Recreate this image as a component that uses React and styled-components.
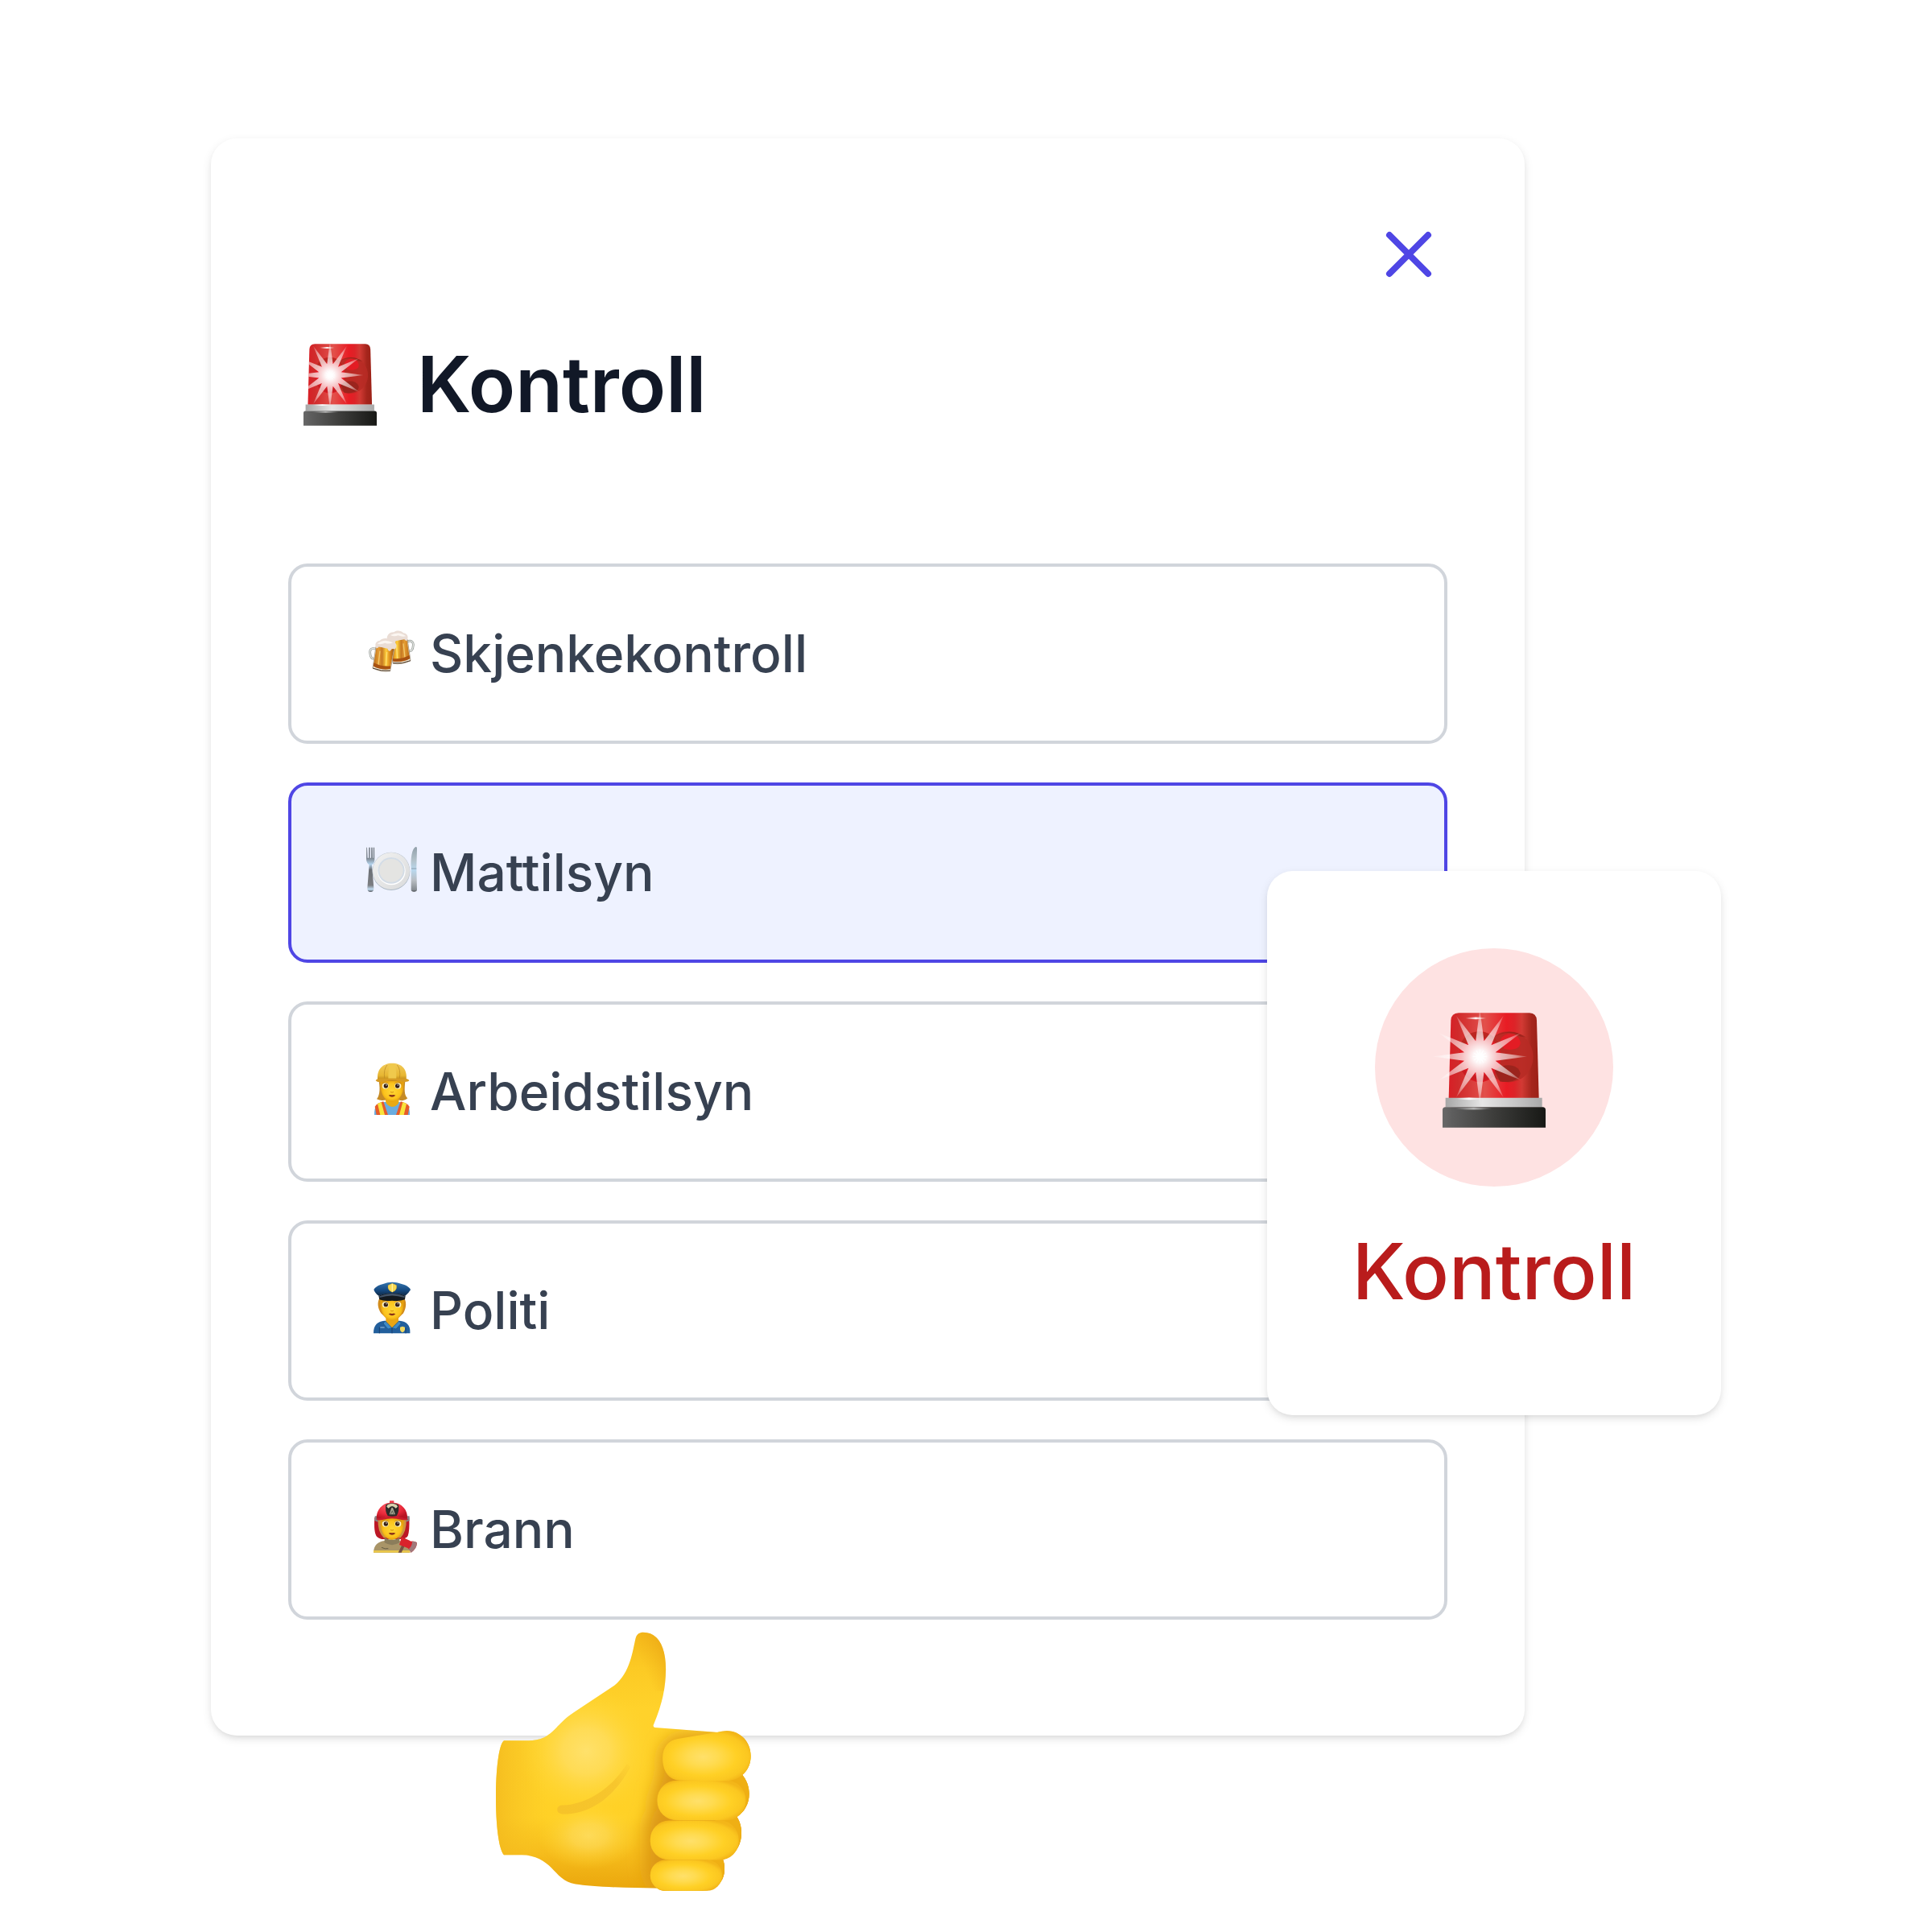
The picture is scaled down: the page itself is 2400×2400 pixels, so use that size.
import React from 'react'
import styled, { createGlobalStyle } from 'styled-components'

const GlobalStyle = createGlobalStyle`
  * {
    box-sizing: border-box;
  }

  body {
    margin: 0;
    background: #ffffff;
    font-family: Inter, "Liberation Sans", sans-serif;
  }
`

const Page = styled.main`
  padding: 172px 506px 244px 262px;
`

const Panel = styled.section`
  position: relative;
  display: flex;
  flex-direction: column;
  padding: 96px 96px 144px;
  border-radius: 32px;
  background: #ffffff;
  box-shadow: 0 4px 12px rgba(0, 0, 0, 0.1), 0 4px 8px -4px rgba(0, 0, 0, 0.1);
`

const CloseButton = styled.button`
  align-self: flex-end;
  display: flex;
  width: 96px;
  height: 96px;
  padding: 0;
  border: none;
  background: transparent;
  color: #4f46e5;
  cursor: pointer;

  svg {
    width: 100%;
    height: 100%;
  }
`

const Heading = styled.h1`
  display: flex;
  align-items: center;
  gap: 32px;
  margin: 56px 0 166px;
  color: #111827;
  font-size: 96px;
  font-weight: 600;
  line-height: 114px;
`

const HeadingIcon = styled.span`
  display: flex;
  justify-content: center;
  width: 128px;
  padding-top: 2px;

  svg {
    width: 91px;
    height: 102px;
  }
`

const Options = styled.div`
  display: flex;
  flex-direction: column;
  gap: 48px;
`

const Option = styled.button`
  display: flex;
  align-items: center;
  gap: 14px;
  width: 100%;
  padding: 60px 92px;
  border: 4px solid ${({ $selected }) => ($selected ? '#4f46e5' : '#d1d5db')};
  border-radius: 24px;
  background: ${({ $selected }) => ($selected ? '#eef2ff' : '#ffffff')};
  color: #374151;
  font-family: inherit;
  font-size: 64px;
  font-weight: 500;
  line-height: 96px;
  text-align: left;
  cursor: pointer;
`

const Emoji = styled.svg`
  flex: none;
  width: 66px;
  height: 66px;
  overflow: visible;
`

const Card = styled.article`
  position: absolute;
  top: 910px;
  right: -244px;
  display: flex;
  flex-direction: column;
  align-items: center;
  gap: 48px;
  width: 564px;
  padding: 96px 0 122px;
  border-radius: 32px;
  background: #ffffff;
  box-shadow: 0 4px 12px rgba(0, 0, 0, 0.1), 0 4px 8px -4px rgba(0, 0, 0, 0.1);
`

const Circle = styled.div`
  display: flex;
  align-items: center;
  justify-content: center;
  width: 296px;
  height: 296px;
  padding-top: 6px;
  border-radius: 50%;
  background: #fee2e2;

  svg {
    width: 128px;
    height: 143px;
    overflow: visible;
  }
`

const CardTitle = styled.h2`
  margin: 0;
  color: #b91c1c;
  font-size: 96px;
  font-weight: 500;
  line-height: 114px;
`

const ThumbWrap = styled.div`
  position: absolute;
  bottom: -193px;
  left: 354px;
  display: flex;

  svg {
    width: 317px;
    height: 322px;
  }
`

// twelve pointed flash in front of the lamp
function starPoints(cx, cy, outer, inner) {
  const points = []
  for (let i = 0; i < 24; i += 1) {
    const r = i % 2 === 0 ? outer : inner
    const a = (i * Math.PI) / 12
    points.push(`${(cx + r * Math.cos(a)).toFixed(1)},${(cy + r * Math.sin(a)).toFixed(1)}`)
  }
  return points.join(' ')
}

function Siren({ id, clipRays }) {
  const dome = 'M337 322 Q338 295 366 294 H630 Q656 295 657 322 L665 612 H329 Z'
  return (
    <svg viewBox="306 294 384 428" aria-hidden="true">
      <defs>
        <linearGradient id={`${id}-dome`}>
          <stop offset="0" stopColor="#d81f26" />
          <stop offset="0.1" stopColor="#d02a2b" />
          <stop offset="0.4" stopColor="#e2504b" />
          <stop offset="0.64" stopColor="#e81c24" />
          <stop offset="0.73" stopColor="#dd2328" />
          <stop offset="0.81" stopColor="#d23a34" />
          <stop offset="0.92" stopColor="#a5251c" />
          <stop offset="1" stopColor="#9c2117" />
        </linearGradient>
        <linearGradient id={`${id}-ring`}>
          <stop offset="0" stopColor="#a6a6a6" />
          <stop offset="0.38" stopColor="#e6e6e6" />
          <stop offset="0.75" stopColor="#c4c4c4" />
          <stop offset="1" stopColor="#a9a9a9" />
        </linearGradient>
        <linearGradient id={`${id}-base`}>
          <stop offset="0" stopColor="#686868" />
          <stop offset="0.1" stopColor="#5d5d5d" />
          <stop offset="0.5" stopColor="#3d3d3b" />
          <stop offset="1" stopColor="#171815" />
        </linearGradient>
        <linearGradient id={`${id}-shine`}>
          <stop offset="0" stopColor="#fff" stopOpacity="0" />
          <stop offset="0.5" stopColor="#fff" stopOpacity="0.95" />
          <stop offset="1" stopColor="#fff" stopOpacity="0" />
        </linearGradient>
        <radialGradient id={`${id}-flash`} gradientUnits="userSpaceOnUse" cx="445" cy="457" r="176">
          <stop offset="0" stopColor="#fff" />
          <stop offset="0.14" stopColor="#fff" stopOpacity="0.96" />
          <stop offset="0.38" stopColor="#fff" stopOpacity="0.72" />
          <stop offset="0.75" stopColor="#fff" stopOpacity="0.5" />
          <stop offset="1" stopColor="#fff" stopOpacity="0.15" />
        </radialGradient>
        <clipPath id={`${id}-clip`}>
          <path d={dome} />
        </clipPath>
      </defs>
      <path d={dome} fill={`url(#${id}-dome)`} />
      <ellipse cx="552" cy="458" rx="92" ry="95" fill="#b72b25" opacity="0.9" />
      <path d="M498 383 Q560 345 618 386 L595 382 Q555 355 498 383" fill="#8e2018" opacity="0.6" />
      <ellipse cx="445" cy="458" rx="78" ry="95" fill="#e01b24" />
      <path d="M370 430 C376 344 500 344 518 420 C480 376 416 376 370 430" fill="#b52821" opacity="0.85" />
      <path d="M372 488 C380 568 504 568 520 490 C485 540 410 542 372 488" fill="#c71d22" opacity="0.8" />
      <path d="M520 402 C524 366 588 358 596 404 C598 430 560 436 535 428 Z" fill="#e31c24" />
      <path d="M500 508 C540 478 590 486 596 520 C594 548 550 556 520 550 Z" fill="#94231b" opacity="0.8" />
      <path d="M317 611 H677 V645 H317 Z" fill={`url(#${id}-ring)`} />
      <path d="M306 656 Q306 645 317 645 H679 Q690 645 690 656 V722 H306 Z" fill={`url(#${id}-base)`} />
      <ellipse cx="430" cy="314" rx="40" ry="4" fill={`url(#${id}-shine)`} />
      <ellipse cx="422" cy="651" rx="70" ry="4" fill={`url(#${id}-shine)`} opacity="0.6" />
      <ellipse cx="405" cy="614" rx="50" ry="4" fill={`url(#${id}-shine)`} />
      <g clipPath={clipRays ? `url(#${id}-clip)` : undefined}>
        <polygon points={starPoints(445, 457, 176, 60)} fill={`url(#${id}-flash)`} />
        <polygon points={starPoints(445, 457, 30, 12)} fill="#fff" />
      </g>
    </svg>
  )
}

function Mug() {
  return (
    <g>
      <path d="M111 139 C97 133 88 139 89 152 C90 169 95 177 108 174" fill="none" stroke="#8f9490" strokeWidth="8" />
      <path d="M111 139 C97 133 88 139 89 152 C90 169 95 177 108 174" fill="none" stroke="#e3e6e2" strokeWidth="4" />
      <path d="M111 130 L180 137 L164 221 Q130 226 99 210 Z" fill="#f1e7d4" stroke="#8d7a62" strokeWidth="2" />
      <path d="M113 130 L178 137 L164 212 Q130 218 102 202 Z" fill="url(#beer)" />
      <path d="M126 146 L120 198 M152 150 L148 202" stroke="#fff0a0" strokeWidth="4" opacity="0.55" />
      <path d="M103 190 Q132 206 166 202 L164 213 Q130 218 102 203 Z" fill="#a85212" />
      <path d="M99 210 Q130 223 164 219" fill="none" stroke="#4d3c2d" strokeWidth="3" />
      <path d="M110 130 C106 114 117 108 126 107 C134 96 155 97 160 104 C178 102 190 118 186 131 C184 145 174 134 168 140 C164 151 157 146 154 137 L122 130 Q114 142 110 130" fill="#eaddd5" />
      <path d="M116 119 Q142 98 174 115 Q160 122 145 116 Q130 123 116 119" fill="#fbf6f1" />
    </g>
  )
}

function BeerEmoji() {
  return (
    <Emoji viewBox="72 57 198 198" aria-hidden="true">
      <defs>
        <linearGradient id="beer">
          <stop offset="0" stopColor="#b96c16" />
          <stop offset="0.25" stopColor="#e59c33" />
          <stop offset="0.42" stopColor="#c67a24" />
          <stop offset="0.62" stopColor="#ffcf3a" />
          <stop offset="0.82" stopColor="#d9861c" />
          <stop offset="1" stopColor="#9c5816" />
        </linearGradient>
      </defs>
      {/* back mug is the front one mirrored */}
      <g transform="translate(339 -28) scale(-1 1)">
        <Mug />
      </g>
      <Mug />
    </Emoji>
  )
}

function PlateEmoji() {
  return (
    <Emoji viewBox="72 63 198 198" aria-hidden="true">
      <defs>
        <linearGradient id="steel" x2="0" y2="1">
          <stop offset="0" stopColor="#636a72" />
          <stop offset="0.25" stopColor="#828c96" />
          <stop offset="0.38" stopColor="#b4d4ee" />
          <stop offset="0.5" stopColor="#6b6f75" />
          <stop offset="0.85" stopColor="#7c7e82" />
          <stop offset="0.94" stopColor="#c2ddf2" />
          <stop offset="1" stopColor="#53565b" />
        </linearGradient>
        <linearGradient id="blade" x2="0" y2="1">
          <stop offset="0" stopColor="#91a0aa" />
          <stop offset="0.3" stopColor="#b3c2ca" />
          <stop offset="0.52" stopColor="#b9d8ee" />
          <stop offset="0.75" stopColor="#b8bdc2" />
          <stop offset="0.96" stopColor="#858b91" />
          <stop offset="1" stopColor="#44484c" />
        </linearGradient>
        <linearGradient id="china" x2="1" y2="1">
          <stop offset="0" stopColor="#f2f2f1" />
          <stop offset="1" stopColor="#d9dadb" />
        </linearGradient>
      </defs>
      <path d="M78 68 L80 107 H84 L85 68 H89 V107 H93 L94 68 H98 L99 107 H101 L102 68 H105 L106 113 Q106 126 96 133 L103 220 Q104 234 91 234 Q78 234 79 220 L86 133 Q75 126 75 112 L76 68 Z" fill="url(#steel)" />
      <ellipse cx="168" cy="157" rx="70" ry="71" fill="#adb9c4" />
      <ellipse cx="168" cy="156" rx="69" ry="69" fill="url(#china)" />
      <ellipse cx="169" cy="157" rx="52" ry="51" fill="#fff" />
      <ellipse cx="168" cy="154" rx="50" ry="49" fill="#d3dce6" />
      <ellipse cx="168" cy="154" rx="44" ry="43" fill="#e4e4e2" />
      <path d="M242 144 C240 110 245 72 259 66 Q265 65 264 76 L262 144 L264 226 Q264 233 253 233 Q242 233 242 226 Z" fill="url(#blade)" />
      <path d="M243 147 H262" stroke="#76848f" strokeWidth="2" />
    </Emoji>
  )
}

function Face({ y = 0 }) {
  return (
    <g transform={`translate(0 ${y})`}>
      <path d="M128 125 H215 C217 162 207 201 171 207 C137 202 125 165 128 125" fill="url(#skin)" />
      <ellipse cx="146" cy="147" rx="12" ry="11" fill="#f9f1c5" />
      <ellipse cx="193" cy="147" rx="12" ry="11" fill="#f9f1c5" />
      <circle cx="148" cy="147" r="8" fill="#372017" />
      <circle cx="191" cy="147" r="8" fill="#372017" />
      <circle cx="150" cy="144" r="2" fill="#fff" />
      <circle cx="193" cy="144" r="2" fill="#fff" />
      <path d="M165 169 Q171 174 177 169" fill="none" stroke="#d38c13" strokeWidth="3" />
      <path d="M158 182 Q165 178 171 181 Q177 178 184 182 Q171 194 158 182" fill="#862e16" />
      <path d="M133 138 Q145 129 158 138 M181 138 Q194 129 206 138" fill="none" stroke="#b57a1c" strokeWidth="2" />
    </g>
  )
}

function WorkerEmoji() {
  return (
    <Emoji viewBox="72 69 198 198" aria-hidden="true">
      <defs>
        <radialGradient id="skin">
          <stop offset="0" stopColor="#ffd735" />
          <stop offset="0.7" stopColor="#fcc41d" />
          <stop offset="1" stopColor="#e5a00d" />
        </radialGradient>
        <linearGradient id="helmet" x2="0" y2="1">
          <stop offset="0" stopColor="#f2cb59" />
          <stop offset="0.7" stopColor="#e7b632" />
          <stop offset="1" stopColor="#b47c12" />
        </linearGradient>
      </defs>
      <path d="M122 130 C128 165 123 185 114 196 Q132 205 150 198 H194 Q215 207 229 193 C216 182 217 160 220 130 Z" fill="#c68b26" />
      <path d="M105 255 C104 222 116 209 142 207 H198 C227 209 238 222 237 255 Z" fill="#6aacdf" />
      <path d="M146 198 H197 Q198 223 171 225 Q148 222 146 198" fill="#e9aa14" />
      <path d="M107 224 Q118 209 139 205 L156 255 H113 Z" fill="#e65b29" />
      <path d="M236 224 Q225 209 203 205 L186 255 H230 Z" fill="#e65b29" />
      <path d="M117 213 L131 207 L144 255 H127 Z M225 213 L211 207 L198 255 H215 Z" fill="#f9e33b" />
      <Face />
      <path d="M118 128 C111 84 138 62 171 62 C206 62 231 84 223 128 Z" fill="url(#helmet)" />
      <path d="M143 119 Q139 84 153 69 M199 119 Q204 84 190 69" fill="none" stroke="#b88721" strokeWidth="2" />
      <path d="M157 119 Q157 75 164 65 H180 Q188 80 187 119" fill="#f0c94c" />
      <path d="M110 127 Q115 117 142 119 H201 Q230 117 235 127 Q229 135 198 130 Q171 124 146 130 Q117 137 110 127" fill="#d69b24" />
    </Emoji>
  )
}

function PoliceEmoji() {
  return (
    <Emoji viewBox="72 75 198 198" aria-hidden="true">
      <defs>
        <linearGradient id="cap" x2="0" y2="1">
          <stop offset="0" stopColor="#3475af" />
          <stop offset="0.6" stopColor="#154981" />
          <stop offset="1" stopColor="#102945" />
        </linearGradient>
      </defs>
      <path d="M124 128 C114 147 119 167 130 184 L148 202 H195 L213 184 C222 167 227 147 217 128 Z" fill="#d28c1b" />
      <path d="M102 259 C101 226 119 215 142 212 H199 C225 215 240 227 238 259 Z" fill="#225f9c" />
      <path d="M148 200 H195 V220 L171 239 L148 220 Z" fill="#e9a514" />
      <path d="M146 213 L171 239 L156 243 L138 222 Z M197 213 L171 239 L186 243 L205 222 Z" fill="#3e8bc8" stroke="#174f84" strokeWidth="2" />
      <path d="M171 239 V259 M124 236 V259 M222 239 V259" stroke="#153f70" strokeWidth="3" />
      <path d="M127 237 H143" stroke="#9ec5e6" strokeWidth="3" />
      <path d="M201 236 L210 233 L219 236 V246 Q217 253 210 256 Q202 253 201 246 Z" fill="#f1d860" />
      <Face y={5} />
      <path d="M121 119 Q171 95 221 119 L219 133 Q199 141 171 137 Q142 141 124 133 Z" fill="#141a20" />
      <path d="M103 96 C112 79 142 75 155 70 Q172 66 188 70 C204 75 232 79 240 96 Q233 110 220 119 Q171 100 121 119 Q107 109 103 96" fill="url(#cap)" />
      <path d="M124 121 Q171 100 218 121 L217 126 Q171 111 125 126 Z" fill="#435367" />
      <path d="M156 80 L165 76 L172 73 L179 76 L188 80 V90 Q185 101 172 106 Q159 101 156 90 Z" fill="#f6d751" stroke="#b88e23" strokeWidth="1" />
      <path d="M172 74 V104" stroke="#fff3a0" strokeWidth="4" />
    </Emoji>
  )
}

function FireEmoji() {
  return (
    <Emoji viewBox="72 66 198 198" aria-hidden="true">
      <defs>
        <radialGradient id="fireHelmet" cx="0.4" cy="0.3" r="0.7">
          <stop offset="0" stopColor="#fa5963" />
          <stop offset="0.65" stopColor="#e8293a" />
          <stop offset="1" stopColor="#b81422" />
        </radialGradient>
      </defs>
      <path d="M106 120 Q102 176 114 191 Q126 202 143 201 H197 Q223 201 230 189 Q237 170 235 120 Z" fill="#bc1725" />
      <path d="M107 115 H119 V137 L106 132 Z M223 115 H236 V132 L223 137 Z" fill="#858585" />
      <path d="M119 127 H224 Q226 172 203 196 H140 Q116 172 119 127" fill="#cc9440" />
      <path d="M102 251 C103 222 118 211 143 207 H198 C225 211 239 225 238 251 Z" fill="#a99568" />
      <path d="M102 243 H238 V251 H102 Z" fill="#e9c74b" />
      <path d="M132 232 Q145 239 157 236" fill="none" stroke="#655c45" strokeWidth="3" />
      <Face y={-3} />
      <path d="M143 196 Q171 212 199 196 V214 Q171 231 143 214 Z" fill="#8b7d5b" />
      <path d="M113 126 C111 91 136 67 162 65 V58 H178 V65 C207 67 231 92 228 126 Q171 109 113 126" fill="url(#fireHelmet)" />
      <path d="M110 128 Q171 105 233 128 Q220 131 207 129 Q171 119 135 129 Q120 132 110 128" fill="#c91c2c" />
      <path d="M148 73 Q171 60 195 73 Q199 98 188 114 Q171 119 155 114 Q144 98 148 73" fill="#2c2c29" />
      <path d="M151 80 Q151 69 171 68 Q191 69 192 80 L185 86 Q171 70 158 86 Z" fill="#d8d0ad" />
      <path d="M161 109 L168 87 Q171 79 175 87 L183 109 Z" fill="#aaa995" />
      <path d="M166 108 L172 95 L177 108" fill="none" stroke="#393930" strokeWidth="2" />
      <path d="M213 212 L223 216 L206 251 H194 Z" fill="#755143" />
      <path d="M207 193 L242 209 Q256 208 264 214 Q263 238 242 251 Q236 238 229 234 L198 222 Z" fill="#d9222b" />
      <path d="M246 210 Q257 208 264 214 Q263 238 242 251 Q236 243 234 237 Q246 227 246 210" fill="#a1797b" />
    </Emoji>
  )
}

const hand =
  'M108 486 C88 500 78 600 78 700 C78 800 88 890 108 912 L175 912 C225 912 262 937 285 960 C310 985 330 1013 375 1021 C430 1030 560 1036 680 1036 C690 1045 700 1046 715 1046 L850 1046 C900 1046 931 1010 931 965 C931 950 929 940 925 929 C965 920 994 880 994 830 C994 805 987 785 976 769 C1005 755 1023 720 1023 685 C1023 655 1012 630 997 613 C1020 595 1029 570 1029 543 C1029 490 990 450 940 450 L905 455 L672 437 C665 435 664 430 667 425 C700 345 711 290 712 220 C712 130 680 82 628 82 C612 82 603 90 599 105 C588 150 580 232 520 280 L370 380 C310 420 305 448 260 473 C240 482 220 486 200 486 Z'

function Thumb() {
  return (
    <svg viewBox="78 80 952 966" aria-hidden="true">
      <defs>
        <linearGradient id="hand" gradientUnits="userSpaceOnUse" x1="400" y1="80" x2="400" y2="1040">
          <stop offset="0" stopColor="#f5b91b" />
          <stop offset="0.14" stopColor="#fcca24" />
          <stop offset="0.3" stopColor="#ffd22b" />
          <stop offset="0.72" stopColor="#ffd126" />
          <stop offset="0.86" stopColor="#f6bc1b" />
          <stop offset="1" stopColor="#eaa60d" />
        </linearGradient>
        <linearGradient id="wrist" gradientUnits="userSpaceOnUse" x1="78" y1="700" x2="270" y2="700">
          <stop offset="0" stopColor="#f3b91e" stopOpacity="0.8" />
          <stop offset="1" stopColor="#f8c525" stopOpacity="0" />
        </linearGradient>
        <linearGradient id="thumbSide" gradientUnits="userSpaceOnUse" x1="620" y1="190" x2="740" y2="140">
          <stop offset="0" stopColor="#f0b017" stopOpacity="0" />
          <stop offset="1" stopColor="#e9a414" stopOpacity="0.9" />
        </linearGradient>
        <radialGradient id="glow">
          <stop offset="0" stopColor="#ffe16b" />
          <stop offset="0.35" stopColor="#ffde60" stopOpacity="0.8" />
          <stop offset="0.7" stopColor="#ffd940" stopOpacity="0.4" />
          <stop offset="1" stopColor="#ffd52f" stopOpacity="0" />
        </radialGradient>
        <radialGradient id="finger" cx="0.46" cy="0.52" r="0.58">
          <stop offset="0" stopColor="#ffe06a" />
          <stop offset="0.3" stopColor="#ffdb50" />
          <stop offset="0.65" stopColor="#ffd025" />
          <stop offset="0.88" stopColor="#fbc720" />
          <stop offset="1" stopColor="#f3b619" />
        </radialGradient>
        <linearGradient id="crease" gradientUnits="userSpaceOnUse" x1="310" y1="745" x2="590" y2="560">
          <stop offset="0" stopColor="#f6c329" />
          <stop offset="0.7" stopColor="#f7c62d" />
          <stop offset="1" stopColor="#f7c62d" stopOpacity="0" />
        </linearGradient>
        <filter id="soft" x="-50%" y="-50%" width="200%" height="200%">
          <feGaussianBlur stdDeviation="30" />
        </filter>
        <clipPath id="handClip">
          <path d={hand} />
        </clipPath>
      </defs>
      <path d={hand} fill="url(#hand)" />
      <g clipPath="url(#handClip)">
        <path d="M78 480 H280 V920 H78 Z" fill="url(#wrist)" />
        <path d="M590 80 H715 V300 H590 Z" fill="url(#thumbSide)" />
        <ellipse cx="415" cy="525" rx="250" ry="240" fill="url(#glow)" />
        <ellipse cx="425" cy="840" rx="190" ry="125" fill="url(#glow)" opacity="0.75" />
        <path d="M925 455 L760 468 C705 478 690 520 690 570 C690 650 650 680 658 740 C620 800 638 850 636 900 C630 970 640 1010 670 1050 H1040 V455 Z" fill="#dc9713" filter="url(#soft)" />
        <path d="M930 600 H1035 V1040 H850 Z" fill="#efaf14" />
      </g>
      <path
        d="M307 743 C307 733 315 727 328 727 C430 722 520 650 567 572 L580 584 C535 670 450 760 330 760 C315 759 307 753 307 743"
        fill="url(#crease)"
      />
      <rect x="654" y="931" width="268" height="115" rx="56" fill="url(#finger)" />
      <rect x="654" y="784" width="330" height="147" rx="70" fill="url(#finger)" />
      <rect x="680" y="634" width="330" height="149" rx="72" fill="url(#finger)" />
      <path
        d="M765 634 C720 634 700 595 700 552 C700 510 722 484 757 479 L905 454 Q925 450 940 450 C990 450 1029 495 1029 543 C1029 595 990 636 940 636 Z"
        fill="url(#finger)"
      />
    </svg>
  )
}

const options = [
  { label: 'Skjenkekontroll', icon: BeerEmoji },
  { label: 'Mattilsyn', icon: PlateEmoji },
  { label: 'Arbeidstilsyn', icon: WorkerEmoji },
  { label: 'Politi', icon: PoliceEmoji },
  { label: 'Brann', icon: FireEmoji },
]

function App() {
  const [selected, setSelected] = React.useState('Mattilsyn')

  return (
    <Page>
      <GlobalStyle />
      <Panel>
        <CloseButton type="button" aria-label="Lukk">
          <svg viewBox="0 0 24 24" fill="none" stroke="currentColor" strokeWidth="2" strokeLinecap="round">
            <path d="M6 18L18 6M6 6l12 12" />
          </svg>
        </CloseButton>
        <Heading>
          <HeadingIcon>
            <Siren id="heading" clipRays />
          </HeadingIcon>
          Kontroll
        </Heading>
        <Options>
          {options.map(({ label, icon: Icon }) => (
            <Option
              key={label}
              type="button"
              aria-pressed={selected === label}
              $selected={selected === label}
              onClick={() => setSelected(label)}
            >
              <Icon />
              {label}
            </Option>
          ))}
        </Options>
        <Card>
          <Circle>
            <Siren id="card" />
          </Circle>
          <CardTitle>Kontroll</CardTitle>
        </Card>
        <ThumbWrap>
          <Thumb />
        </ThumbWrap>
      </Panel>
    </Page>
  )
}

export default App
